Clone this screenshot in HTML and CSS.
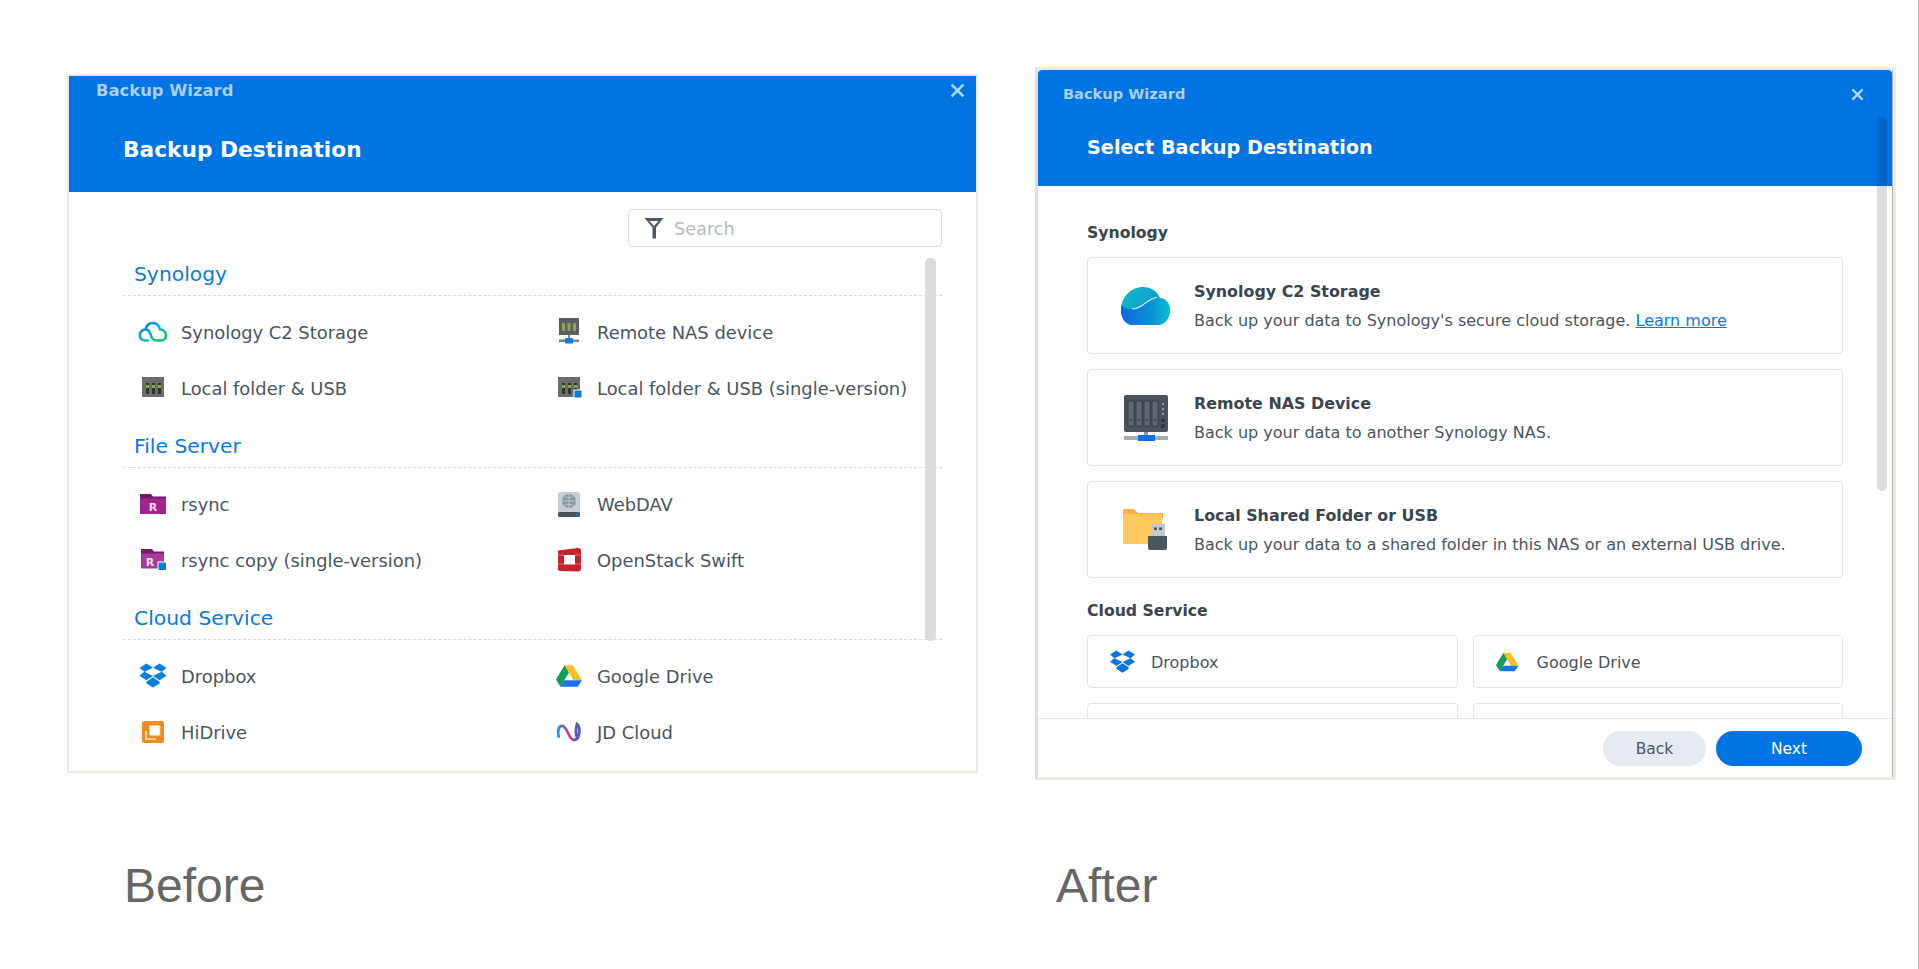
FILE: index.html
```html
<!DOCTYPE html>
<html lang="en">
<head>
    <meta charset="UTF-8">
    <title>Backup Wizard - Before and After</title>
    <link rel="stylesheet" href="styles.css">
</head>
<body>
    <div class="page">
        <!-- Before -->
        <section class="column column-before">
            <div class="window window-old">
                <header class="wizard-header header-old">
                    <div class="wizard-name">Backup Wizard</div>
                    <h1 class="wizard-title">Backup Destination</h1>
                    <svg class="close-icon" viewBox="0 0 14 14"><path d="M1.5 1.5l11 11M12.5 1.5l-11 11"/></svg>
                </header>
                <div class="old-body">
                    <div class="search-row">
                        <div class="search-box">
                            <svg class="filter-icon" viewBox="0 0 20 22"><path d="M0.500 1h19L12 10.500V21.500H8.500V10.500z M5.500 4l4.500 5 4.500-5z" fill="#4f5963" fill-rule="evenodd"/></svg>
                            <span>Search</span>
                        </div>
                    </div>
                    <h3 class="old-group">Synology</h3>
                    <div class="old-list">
                        <div class="old-item">
                            <svg class="old-icon" viewBox="0 0 30 24">
                                <defs>
                                    <linearGradient id="c2line" x1="0" y1="0" x2="1" y2="0.800">
                                        <stop offset="0.15" stop-color="#0a7fdc"/>
                                        <stop offset="0.55" stop-color="#0fb3c4"/>
                                        <stop offset="0.9" stop-color="#10c76b"/>
                                    </linearGradient>
                                </defs>
                                <path d="M7.500 9.500C10 9.500 11.500 11 12.500 14 13.500 18 15 20.500 18 20.500H23C26 20.500 28 18.500 28 15.500 28 12 25.500 9.500 22 9.500 21 5.500 18.500 3 15 3 11.500 3 8.500 5.500 7.500 9.500 4 9.500 2 12 2 15 2 18.500 4 20.500 7.500 20.500H10" fill="none" stroke="url(#c2line)" stroke-width="2.600" stroke-linecap="round" stroke-linejoin="round"/>
                            </svg>
                            <span>Synology C2 Storage</span>
                        </div>
                        <div class="old-item">
                            <svg class="old-icon" viewBox="0 0 30 30">
                                <rect x="5" y="1" width="20" height="17" fill="#5b5f58"/>
                                <path d="M8 6h3v8H8zM13.500 6h3v8h-3zM19 6h3v8h-3z" fill="#8f9b6a"/>
                                <path d="M8 8h3v2H8zM13.500 8h3v2h-3zM19 8h3v2h-3z" fill="#7cb63c"/>
                                <rect x="14" y="18" width="2" height="4" fill="#7b838a"/>
                                <rect x="5" y="22.500" width="20" height="2.500" fill="#7b838a"/>
                                <rect x="11" y="21" width="8" height="5.500" rx="1" fill="#0b7be0"/>
                            </svg>
                            <span>Remote NAS device</span>
                        </div>
                        <div class="old-item">
                            <svg class="old-icon" viewBox="0 0 30 30">
                                <rect x="4" y="4" width="22" height="20" fill="#6b6e68"/>
                                <path d="M8 10h3v11H8zM14 10h3v11h-3zM20 10h3v11h-3z" fill="#2f332f"/>
                                <path d="M8 12h3v3H8zM14 12h3v3h-3zM20 12h3v3h-3z" fill="#86a84a"/>
                            </svg>
                            <span>Local folder &amp; USB</span>
                        </div>
                        <div class="old-item">
                            <svg class="old-icon" viewBox="0 0 30 30">
                                <rect x="4" y="4" width="22" height="20" fill="#6b6e68"/>
                                <path d="M8 10h3v11H8zM14 10h3v11h-3zM20 10h3v11h-3z" fill="#2f332f"/>
                                <path d="M8 12h3v3H8zM14 12h3v3h-3zM20 12h3v3h-3z" fill="#86a84a"/>
                                <rect x="20" y="17" width="8" height="8" fill="#0b7be0" stroke="#fff"/>
                            </svg>
                            <span>Local folder &amp; USB (single-version)</span>
                        </div>
                    </div>
                    <h3 class="old-group">File Server</h3>
                    <div class="old-list">
                        <div class="old-item">
                            <svg class="old-icon" viewBox="0 0 30 24">
                                <path d="M2 2h11l2 2.500h13V8H2z" fill="#741a6c"/>
                                <rect x="2" y="6.500" width="26" height="15.500" rx="0.500" fill="#a3268f"/>
                                <text class="folder-letter" x="15" y="19" text-anchor="middle">R</text>
                            </svg>
                            <span>rsync</span>
                        </div>
                        <div class="old-item">
                            <svg class="old-icon" viewBox="0 0 30 30">
                                <rect x="4" y="3" width="22" height="25" rx="3" fill="#c5ced5"/>
                                <circle cx="15" cy="12" r="7" fill="#8b96a0"/>
                                <path d="M8 12h14M15 5v14M10.500 7.500c3 1.500 6 1.500 9 0M10.500 16.500c3-1.500 6-1.500 9 0" stroke="#c5ced5" stroke-width="0.800" fill="none"/>
                                <rect x="4" y="23" width="22" height="5" rx="1.500" fill="#47525c"/>
                                <circle cx="23" cy="25.500" r="1" fill="#1486e6"/>
                            </svg>
                            <span>WebDAV</span>
                        </div>
                        <div class="old-item">
                            <svg class="old-icon" viewBox="0 0 30 24">
                                <path d="M3 1h11l2 2.500h10V7H3z" fill="#741a6c"/>
                                <rect x="3" y="5.500" width="23" height="15" rx="0.500" fill="#a83d97"/>
                                <text class="folder-letter" x="12" y="18" text-anchor="middle">R</text>
                                <rect x="20" y="14" width="8.500" height="8.500" fill="#0b7be0" stroke="#fff"/>
                            </svg>
                            <span>rsync copy (single-version)</span>
                        </div>
                        <div class="old-item">
                            <svg class="old-icon" viewBox="0 0 30 30">
                                <path d="M4 5.500L24 3c2 0 3 1 3 2.500V24c0 1.500-1 2.500-3 2.500L6 26c-1.500 0-2-1-2-2.500z" fill="#c8202c"/>
                                <rect x="10" y="10" width="11" height="9.500" fill="#fff"/>
                                <path d="M4 10h6M4 19h6M21 10h6M21 19h6" stroke="#e8858a" stroke-width="0.800"/>
                            </svg>
                            <span>OpenStack Swift</span>
                        </div>
                    </div>
                    <h3 class="old-group">Cloud Service</h3>
                    <div class="old-list">
                        <div class="old-item">
                            <svg class="old-icon" viewBox="-1.500 -2 31 30"><path d="M7.200 0L0 4.700l5 4-5 4 7.200 4.700L14 12.900l6.800 4.500 7.200-4.700-5-4 5-4L20.800 0 14 4.500zM14 4.500l8.800 4.200L14 12.900 5.200 8.700zM14 14.400l-6.800 4.500v1.800l6.800 4.300 6.800-4.300v-1.800z" fill="#0a7fdc"/></svg>
                            <span>Dropbox</span>
                        </div>
                        <div class="old-item">
                            <svg class="old-icon" viewBox="-2 -3 31 30">
                                <path d="M9 1l4.500 7.500L4.500 23 0 15.500z" fill="#0f9d58"/>
                                <path d="M9 1h8.500L27 16.500h-9z" fill="#f6bf26"/>
                                <path d="M8.500 16.500H27L22.500 23H4.500z" fill="#1a73e8"/>
                            </svg>
                            <span>Google Drive</span>
                        </div>
                        <div class="old-item">
                            <svg class="old-icon" viewBox="0 0 30 30">
                                <rect x="4" y="4" width="22" height="22" rx="2.500" fill="#f58a1f"/>
                                <path d="M8 14v8h10" fill="none" stroke="#fde0bd" stroke-width="1.600"/>
                                <rect x="11.500" y="8.500" width="10.500" height="10" rx="1" fill="#fff" stroke="#fbc48f"/>
                            </svg>
                            <span>HiDrive</span>
                        </div>
                        <div class="old-item">
                            <svg class="old-icon" viewBox="-2 -3 32 30">
                                <defs>
                                    <linearGradient id="jdline" x1="0" y1="0" x2="1" y2="0">
                                        <stop offset="0" stop-color="#12a5d8"/>
                                        <stop offset="0.5" stop-color="#e0367f"/>
                                        <stop offset="1" stop-color="#3b63c8"/>
                                    </linearGradient>
                                </defs>
                                <path d="M3 17C1.500 11 3 5 7 5.500c5 .5 7 15 12 15 4.500 0 6-5 6-10 0-3-1-6-2.500-7-1.500 5-1.500 11 .5 15" fill="none" stroke="url(#jdline)" stroke-width="3" stroke-linecap="round"/>
                            </svg>
                            <span>JD Cloud</span>
                        </div>
                    </div>
                    <div class="old-scrollbar"></div>
                </div>
            </div>
            <div class="caption caption-before">Before</div>
        </section>

        <!-- After -->
        <section class="column column-after">
            <div class="window window-new">
                <header class="wizard-header header-new">
                    <div class="wizard-name">Backup Wizard</div>
                    <h1 class="wizard-title">Select Backup Destination</h1>
                    <svg class="close-icon" viewBox="0 0 14 14"><path d="M1.500 1.500l11 11M12.500 1.500l-11 11"/></svg>
                </header>
                <div class="new-body">
                    <h3 class="new-group">Synology</h3>
                    <div class="big-card">
                        <svg class="big-icon" viewBox="0 0 50 38">
                            <defs>
                                <linearGradient id="cloudTop" x1="0" y1="0" x2="1" y2="0.600">
                                    <stop offset="0" stop-color="#13bcc6"/>
                                    <stop offset="1" stop-color="#0b8ed8"/>
                                </linearGradient>
                                <linearGradient id="cloudLow" x1="0" y1="0" x2="1" y2="0">
                                    <stop offset="0" stop-color="#0f68dc"/>
                                    <stop offset="0.6" stop-color="#0b8fd6"/>
                                    <stop offset="1" stop-color="#0bc4cc"/>
                                </linearGradient>
                                <clipPath id="cloudShape">
                                    <path d="M12 38C4 38 0 31 0 23 0 10 10 0 22 0c8 0 14 4 17 11 6 0 10 6 10 12 0 9-6 15-13 15z"/>
                                </clipPath>
                            </defs>
                            <g clip-path="url(#cloudShape)">
                                <rect width="50" height="38" fill="url(#cloudTop)"/>
                                <path d="M0 18c6 6 14 5 20 1 6-4 10-8 16-8.500 8 .5 14 5.500 14 13.500v14H0z" fill="url(#cloudLow)"/>
                                <path d="M11 22c4 0 7-1.500 10-3.500 5-3.500 9-7.500 15-8" fill="none" stroke="#d6f5f5" stroke-width="1.100"/>
                            </g>
                        </svg>
                        <div class="card-text">
                            <div class="card-title">Synology C2 Storage</div>
                            <div class="card-desc">Back up your data to Synology's secure cloud storage. <a class="learn-more" href="#">Learn more</a></div>
                        </div>
                    </div>
                    <div class="big-card">
                        <svg class="big-icon" viewBox="0 0 50 46">
                            <rect x="3" y="0" width="44" height="37" rx="2" fill="#4a535c"/>
                            <path d="M7 6h6v25H7zM15 6h6v25h-6zM23 6h6v25h-6zM31 6h6v25h-6z" fill="#5f6972" stroke="#2f363d" stroke-width="0.800"/>
                            <circle cx="10" cy="25" r="1" fill="#2f363d"/>
                            <circle cx="18" cy="25" r="1" fill="#2f363d"/>
                            <circle cx="26" cy="25" r="1" fill="#2f363d"/>
                            <circle cx="34" cy="25" r="1" fill="#2f363d"/>
                            <circle cx="42" cy="9" r="1" fill="#aab2ba"/>
                            <circle cx="42" cy="14" r="1" fill="#aab2ba"/>
                            <circle cx="42" cy="19" r="1" fill="#aab2ba"/>
                            <rect x="40" y="24" width="4" height="3" fill="#2f363d"/>
                            <rect x="40" y="29" width="4" height="4" rx="1" fill="#2f363d"/>
                            <rect x="23" y="37" width="4" height="4" fill="#8f99a3"/>
                            <rect x="3" y="41" width="44" height="4" fill="#a4adb6"/>
                            <rect x="17" y="40" width="17" height="6" fill="#0b6fe6"/>
                        </svg>
                        <div class="card-text">
                            <div class="card-title">Remote NAS Device</div>
                            <div class="card-desc">Back up your data to another Synology NAS.</div>
                        </div>
                    </div>
                    <div class="big-card">
                        <svg class="big-icon" viewBox="0 0 50 42">
                            <path d="M2 0h11l4 4h25v6H2z" fill="#ffb040"/>
                            <rect x="2" y="5" width="39" height="30" fill="#ffc95f"/>
                            <rect x="30" y="15" width="14" height="13" rx="1" fill="#c3c8cd"/>
                            <path d="M33 18.500h3v2.500h-3zM38 18.500h3v2.500h-3z" fill="#4a5560"/>
                            <path d="M27 27h19v12a2 2 0 0 1-2 2H29a2 2 0 0 1-2-2z" fill="#4a5560"/>
                        </svg>
                        <div class="card-text">
                            <div class="card-title">Local Shared Folder or USB</div>
                            <div class="card-desc">Back up your data to a shared folder in this NAS or an external USB drive.</div>
                        </div>
                    </div>
                    <h3 class="new-group group-cloud">Cloud Service</h3>
                    <div class="small-cards">
                        <div class="small-card">
                            <svg class="small-icon" viewBox="0 0 28 26"><path d="M7.200 0L0 4.700l5 4-5 4 7.200 4.700L14 12.900l6.800 4.500 7.200-4.700-5-4 5-4L20.800 0 14 4.500zM14 4.500l8.800 4.200L14 12.900 5.200 8.700zM14 14.400l-6.800 4.500v1.800l6.800 4.300 6.800-4.300v-1.800z" fill="#0a74e0"/></svg>
                            <span>Dropbox</span>
                        </div>
                        <div class="small-card">
                            <svg class="small-icon" viewBox="0 0 30 24">
                                <path d="M9 1l4.500 7.500L4.500 23 0 15.500z" fill="#0f9d58"/>
                                <path d="M9 1h8.500L27 16.500h-9z" fill="#f6bf26"/>
                                <path d="M8.500 16.500H27L22.500 23H4.500z" fill="#1a73e8"/>
                            </svg>
                            <span>Google Drive</span>
                        </div>
                        <div class="small-card"></div>
                        <div class="small-card"></div>
                    </div>
                </div>
                <footer class="new-footer">
                    <button class="btn btn-back">Back</button>
                    <button class="btn btn-next">Next</button>
                </footer>
                <div class="new-scrollbar"></div>
            </div>
            <div class="caption caption-after">After</div>
        </section>
    </div>
</body>
</html>
```

FILE: styles.css
```css
* {
    box-sizing: border-box;
}
body {
    margin: 0;
    background: #fff;
    font-family: "DejaVu Sans", sans-serif;
}
.page {
    display: flex;
    width: 1919px;
    height: 969px;
    overflow: hidden;
    border-right: 1px solid #bdbdbd;
}
.column-before {
    margin-left: 67px;
    padding-top: 74px;
    width: 911px;
}
.column-after {
    margin-left: 57px;
    padding-top: 67px;
    width: 861px;
}
.window {
    position: relative;
    background: #fff;
    border: 2px solid #ecebe0;
}
.window-old {
    height: 699px;
}
.window-new {
    height: 713px;
    border-width: 3px;
    border-left-color: #e2e0d4;
    padding-right: 1px;
    box-shadow: inset -1px 0 0 #b4b4ae;
    display: flex;
    flex-direction: column;
}

/* blue header */
.wizard-header {
    position: relative;
    flex: none;
    background: #0074e3;
    color: #fff;
    height: 116px;
}
.header-new {
    border-radius: 4px 4px 0 0;
}
.wizard-name {
    font-weight: bold;
    color: #a8d0f6;
}
.wizard-title {
    margin: 0;
    font-weight: bold;
}
.header-old {
    padding: 4px 0 0 27px;
}
.header-old .wizard-name {
    font-size: 16.4px;
    line-height: 22px;
}
.header-old .wizard-title {
    margin: 33px 0 0 27px;
    font-size: 21.7px;
    line-height: 30px;
}
.header-new {
    padding: 13px 0 0 25px;
}
.header-new .wizard-name {
    font-size: 14.6px;
    line-height: 22px;
}
.header-new .wizard-title {
    margin: 28px 0 0 24px;
    font-size: 19.25px;
    line-height: 30px;
}
.close-icon {
    position: absolute;
    fill: none;
    stroke: #b4d8f8;
    stroke-width: 2.4;
}
.header-old .close-icon {
    top: 7px;
    right: 11px;
    width: 15px;
    height: 15px;
}
.header-new .close-icon {
    top: 18px;
    right: 28px;
    width: 13px;
    height: 13px;
}

/* old layout */
.old-body {
    position: relative;
    padding: 17px 34px 0 54px;
}
.search-row {
    display: flex;
    justify-content: flex-end;
}
.search-box {
    display: flex;
    align-items: center;
    gap: 10px;
    width: 314px;
    height: 38px;
    padding-left: 15px;
    border: 1px solid #d5dfec;
    border-radius: 4px;
    color: #b4bac1;
    font-size: 17.7px;
}
.search-box span {
    padding-top: 2px;
}
.filter-icon {
    width: 20px;
    height: 22px;
}
.old-group {
    margin: 11px 0 0;
    height: 38px;
    padding: 3px 0 0 11px;
    border-bottom: 1px dashed #d3dce4;
    color: #0a79e0;
    font-size: 20.3px;
    font-weight: normal;
    line-height: 26px;
}
.old-group + .old-list + .old-group {
    margin-top: 14px;
}
.old-list {
    display: grid;
    grid-template-columns: 416px 1fr;
    padding-top: 8px;
}
.old-item {
    display: flex;
    align-items: center;
    height: 56px;
    padding-left: 15px;
    gap: 13px;
    color: #4a5560;
    font-size: 17.9px;
}
.old-icon {
    flex: none;
    width: 30px;
    height: 30px;
}
.folder-letter {
    fill: #f3d9ee;
    font-family: "DejaVu Sans", sans-serif;
    font-size: 11px;
    font-weight: bold;
}
.old-scrollbar {
    position: absolute;
    top: 66px;
    right: 40px;
    width: 11px;
    height: 383px;
    border-radius: 5px;
    background: #dcdcdc;
}

/* new layout */
.new-body {
    flex: 1;
    overflow: hidden;
    padding: 35px 49px 0;
}
.new-group {
    margin: 0 0 12px;
    color: #3a4550;
    font-size: 15.7px;
    font-weight: bold;
    line-height: 24px;
}
.group-cloud {
    margin-top: 21px;
}
.big-card {
    display: flex;
    align-items: center;
    height: 97px;
    margin-bottom: 15px;
    padding-left: 33px;
    gap: 23px;
    border: 1px solid #dfe6ee;
    border-radius: 4px;
}
.big-card:last-of-type {
    margin-bottom: 0;
}
.big-icon {
    flex: none;
    width: 50px;
    height: 50px;
}
.card-text {
    padding-top: 1px;
}
.card-title {
    color: #3a4550;
    font-size: 15.9px;
    font-weight: bold;
    line-height: 22px;
}
.card-desc {
    margin-top: 7px;
    color: #4a5560;
    font-size: 16px;
    line-height: 22px;
}
.learn-more {
    color: #0a79e0;
}
.small-cards {
    display: grid;
    grid-template-columns: 1fr 1fr;
    gap: 15px;
}
.small-card {
    display: flex;
    align-items: center;
    height: 53px;
    padding-left: 22px;
    gap: 16px;
    border: 1px solid #dfe6ee;
    border-radius: 4px;
    color: #4a5560;
    font-size: 16px;
}
.small-card span {
    padding-top: 2px;
}
.small-icon {
    flex: none;
    width: 25px;
    height: 24px;
}
.new-footer {
    flex: none;
    display: flex;
    justify-content: flex-end;
    align-items: flex-start;
    gap: 10px;
    height: 59px;
    padding: 12px 30px 0 0;
    border-top: 1px solid #e3e8ee;
}
.btn {
    height: 35px;
    border: none;
    border-radius: 17.5px;
    font-family: inherit;
    font-size: 15.5px;
}
.btn-back {
    width: 103px;
    background: #e6ebf1;
    color: #4a5560;
}
.btn-next {
    width: 146px;
    background: #0074e3;
    color: #fff;
}
.new-scrollbar {
    position: absolute;
    top: 47px;
    right: 6px;
    width: 10px;
    height: 374px;
    border-radius: 5px;
    background: rgba(0, 0, 0, 0.13);
}

/* captions */
.caption {
    color: #666;
    font-family: "Liberation Sans", Arial, sans-serif;
    font-size: 48px;
    line-height: 56px;
}
.caption-before {
    margin: 85px 0 0 57px;
}
.caption-after {
    margin: 78px 0 0 21px;
}
```
